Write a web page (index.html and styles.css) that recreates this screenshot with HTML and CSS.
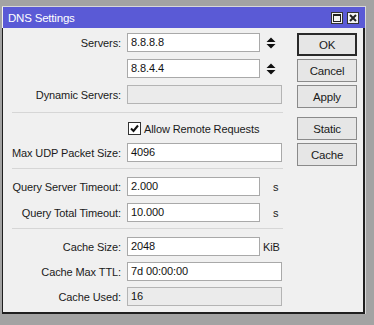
FILE: index.html
```html
<!DOCTYPE html>
<html lang="en">

<head>
  <meta charset="UTF-8">
  <title>DNS Settings</title>
  <link rel="stylesheet" href="styles.css">
</head>

<body>
  <div class="win">
    <div class="titlebar">
      <span class="title">DNS Settings</span>
      <span class="tbtn">
        <svg width="10" height="10" viewBox="0 0 10 10"><rect x="1.5" y="1.5" width="7" height="7" fill="none" stroke="#222" stroke-width="1"/><line x1="1" y1="2" x2="9" y2="2" stroke="#222" stroke-width="2"/></svg>
      </span>
      <span class="tbtn">
        <svg width="10" height="10" viewBox="0 0 10 10"><path d="M2 2 L8 8 M8 2 L2 8" stroke="#222" stroke-width="2"/></svg>
      </span>
    </div>

    <div class="content">
      <div class="form">
        <div class="section">
          <div class="row">
            <label>Servers:</label>
            <div class="field"><div class="input short">8.8.8.8</div><span class="spin"><svg width="10" height="12" viewBox="0 0 10 12"><path d="M0.5 5 L5 0.5 L9.5 5Z M0.5 7 L9.5 7 L5 11.5Z" fill="#111"/></svg></span></div>
          </div>
          <div class="row">
            <label></label>
            <div class="field"><div class="input short">8.8.4.4</div><span class="spin"><svg width="10" height="12" viewBox="0 0 10 12"><path d="M0.5 5 L5 0.5 L9.5 5Z M0.5 7 L9.5 7 L5 11.5Z" fill="#111"/></svg></span></div>
          </div>
          <div class="row">
            <label>Dynamic Servers:</label>
            <div class="field"><div class="input off"></div></div>
          </div>
        </div>

        <div class="sep"></div>

        <div class="section tight">
          <div class="row">
            <label></label>
            <div class="field check">
              <span class="box"><svg width="11" height="11" viewBox="0 0 11 11"><path d="M2 5.5 L4.5 8 L9 2.5" fill="none" stroke="#111" stroke-width="2"/></svg></span>
              <span>Allow Remote Requests</span>
            </div>
          </div>
          <div class="row">
            <label>Max UDP Packet Size:</label>
            <div class="field"><div class="input">4096</div></div>
          </div>
        </div>

        <div class="sep s2"></div>

        <div class="section">
          <div class="row">
            <label>Query Server Timeout:</label>
            <div class="field"><div class="input short">2.000</div><span class="unit sec">s</span></div>
          </div>
          <div class="row">
            <label>Query Total Timeout:</label>
            <div class="field"><div class="input short">10.000</div><span class="unit sec">s</span></div>
          </div>
        </div>

        <div class="sep s2"></div>

        <div class="section cache">
          <div class="row">
            <label>Cache Size:</label>
            <div class="field"><div class="input short">2048</div><span class="unit">KiB</span></div>
          </div>
          <div class="row">
            <label>Cache Max TTL:</label>
            <div class="field"><div class="input">7d 00:00:00</div></div>
          </div>
          <div class="row">
            <label>Cache Used:</label>
            <div class="field"><div class="input off">16</div></div>
          </div>
        </div>
      </div>

      <div class="buttons">
        <button class="default">OK</button>
        <button>Cancel</button>
        <button>Apply</button>
        <button class="gap">Static</button>
        <button>Cache</button>
      </div>
    </div>
  </div>
</body>

</html>
```

FILE: styles.css
```css
body {
  margin: 0;
  background: #a3a3a3;
  font-family: "Liberation Sans", Arial, sans-serif;
  font-size: 11px;
  letter-spacing: -0.1px;
  color: #1a1a1a;
  white-space: nowrap;
}

.win {
  width: 363px;
  margin: 6px 0 0 2px;
  background: #f0f0f0;
  border-top: 1px solid #d8d8d8;
  border-right: 1px solid #d8d8d8;
}

.titlebar {
  height: 21px;
  background: #5a5ad6;
  display: flex;
  align-items: center;
  padding: 0 6px 0 5px;
  margin-left: 1px;
  gap: 4px;
}

.title {
  flex: 1;
  color: #fff;
  font-size: 11.5px;
  letter-spacing: -0.2px;
}

.tbtn {
  width: 12px;
  height: 12px;
  background: #f4f4f4;
  border: 1px solid #333;
  display: flex;
  align-items: center;
  justify-content: center;
  box-sizing: border-box;
}

.content {
  display: flex;
  height: 286px;
  padding-top: 5px;
  box-sizing: border-box;
  border: solid #1f1f1f;
  border-width: 0 2px 2px 1px;
}

.form {
  width: 280px;
}

.section {
  display: flex;
  flex-direction: column;
  gap: 7px;
}

.section.tight {
  gap: 5px;
}

.section.cache {
  gap: 6px;
}

.row {
  display: grid;
  grid-template-columns: 118px 155px;
  column-gap: 6px;
  height: 19px;
  align-items: center;
}

.row label {
  text-align: right;
}

.field {
  display: flex;
  align-items: center;
  height: 19px;
}

.input {
  width: 155px;
  height: 19px;
  box-sizing: border-box;
  background: #fff;
  border: 1px solid #a9a9a9;
  padding: 0 3px;
  line-height: 17px;
  color: #111;
}

.input.short {
  width: 133px;
}

.input.off {
  background: #ebebeb;
  border-color: #b4b4b4;
}

.spin {
  display: flex;
  margin-left: 6px;
}

.unit {
  margin-left: 3px;
}

.unit.sec {
  margin-left: 13px;
}

.check {
  gap: 3px;
}

.box {
  width: 13px;
  height: 13px;
  box-sizing: border-box;
  border: 1px solid #333;
  background: #fff;
  display: flex;
  align-items: center;
  justify-content: center;
  margin-left: 1px;
}

.sep {
  height: 1px;
  background: #d6d6d6;
  margin: 8px 0 6px 9px;
}

.sep.s2 {
  margin: 6px 0 8px 9px;
}

.buttons {
  display: flex;
  flex-direction: column;
  gap: 3px;
  margin-left: 14px;
}

button {
  width: 60px;
  height: 23px;
  background: #e6e6e6;
  border: 1px solid #8a8a8a;
  font-family: inherit;
  font-size: 11.5px;
  letter-spacing: -0.2px;
  color: #1a1a1a;
  padding: 0;
}

button.default {
  border: 2px solid #2a2a2a;
}

button.gap {
  margin-top: 6px;
}
```
